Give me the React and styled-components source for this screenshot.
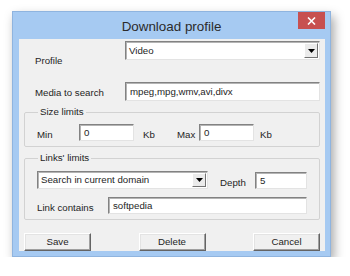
import styled, { createGlobalStyle } from "styled-components";

const GlobalStyle = createGlobalStyle`
  body {
    margin: 0;
    background: #ffffff;
    font-family: "Liberation Sans", Arial, sans-serif;
  }
`;

const Window = styled.div`
  box-sizing: border-box;
  width: 319px;
  margin: 11px 0 0 12px;
  background: #a6caf2;
  border: 1px solid #8fb4df;
  box-shadow: 3px 5px 10px rgba(0, 0, 0, 0.35);
`;

const TitleBar = styled.div`
  height: 27px;
  display: grid;
  grid-template-columns: 1fr auto 1fr;
`;

const Title = styled.div`
  grid-column: 2;
  align-self: center;
  font-size: 13.4px;
  color: #2b2b2b;
  padding-top: 1px;
`;

const CloseButton = styled.div`
  grid-column: 3;
  justify-self: end;
  width: 27px;
  height: 17px;
  margin-right: 5px;
  background: #c75050;
  display: flex;
  align-items: center;
  justify-content: center;
`;

const Client = styled.div`
  box-sizing: border-box;
  margin: 0 5px 5px 6px;
  height: 212px;
  background: #f0f0f0;
  padding: 2px 5px 0 5px;
  display: flex;
  flex-direction: column;
  font-size: 9.7px;
  color: #1e1e1e;
`;

const FormRow = styled.div`
  display: grid;
  grid-template-columns: 101px 195px;
  margin-top: ${(p) => p.$top || 0}px;
`;

const Label = styled.div`
  line-height: 12px;
  padding-left: ${(p) => p.$indent || 0}px;
  padding-top: ${(p) => p.$drop || 0}px;
  white-space: nowrap;
`;

const Sunken = styled.div`
  box-sizing: border-box;
  height: ${(p) => p.$h}px;
  width: ${(p) => (p.$w ? `${p.$w}px` : "auto")};
  background: #ffffff;
  border: 1px solid;
  border-color: #828282 #e3e3e3 #e3e3e3 #828282;
  box-shadow: inset 1px 1px #b4b4b4;
  display: flex;
  align-items: center;
  padding-left: 4px;
  line-height: 12px;
  white-space: nowrap;
`;

const SelectBox = styled(Sunken)`
  padding: 1px 1px 1px 3px;
  justify-content: space-between;
`;

const DropButton = styled.div`
  box-sizing: border-box;
  width: 14px;
  height: 100%;
  background: #ebebeb;
  border: 1px solid;
  border-color: #ffffff #737373 #737373 #ffffff;
  display: flex;
  align-items: center;
  justify-content: center;
`;

const Group = styled.fieldset`
  margin: ${(p) => p.$top}px 0 0 0;
  padding: ${(p) => p.$pt}px 0 5px 12px;
  border: 1px solid #d2d2d2;
  border-radius: 2px;
  min-width: 0;
`;

const Legend = styled.legend`
  margin-left: 1px;
  padding: 0 2px;
  line-height: 12px;
`;

const LineRow = styled.div`
  display: grid;
  grid-template-columns: ${(p) => p.$cols};
  align-items: end;
  margin-top: ${(p) => p.$top || 0}px;
`;

const ButtonRow = styled.div`
  display: flex;
  justify-content: space-between;
  margin-top: 13px;
`;

const Button = styled.div`
  box-sizing: border-box;
  width: 67px;
  height: 18px;
  background: #f0f0f0;
  border: 1px solid;
  border-color: #ffffff #646464 #646464 #ffffff;
  box-shadow: inset -1px -1px #a0a0a0, inset 1px 1px #e3e3e3;
  display: flex;
  align-items: center;
  justify-content: center;
  line-height: 12px;
`;

function Arrow() {
  return (
    <svg width="7" height="4" viewBox="0 0 7 4">
      <path d="M0 0 H7 L3.5 4 Z" fill="#000" />
    </svg>
  );
}

function Select({ value, h, w }) {
  return (
    <SelectBox $h={h} $w={w}>
      <span>{value}</span>
      <DropButton>
        <Arrow />
      </DropButton>
    </SelectBox>
  );
}

export default function App() {
  return (
    <>
      <GlobalStyle />
      <Window>
        <TitleBar>
          <Title>Download profile</Title>
          <CloseButton>
            <svg width="9" height="8" viewBox="0 0 9 8">
              <path d="M1 0.5 L8 7.5 M8 0.5 L1 7.5" stroke="#fff" strokeWidth="1.6" />
            </svg>
          </CloseButton>
        </TitleBar>
        <Client>
          <FormRow>
            <Label $indent={11} $drop={14}>Profile</Label>
            <Select value="Video" h={19} />
          </FormRow>
          <FormRow $top={15}>
            <Label $indent={11} $drop={5}>Media to search</Label>
            <Sunken $h={19}>mpeg,mpg,wmv,avi,divx</Sunken>
          </FormRow>

          <Group $top={5} $pt={6}>
            <Legend>Size limits</Legend>
            <LineRow $cols="42px 55px 43px 22px 55px auto">
              <Label>Min</Label>
              <Sunken $h={17}>0</Sunken>
              <Label $indent={9}>Kb</Label>
              <Label>Max</Label>
              <Sunken $h={17}>0</Sunken>
              <Label $indent={6}>Kb</Label>
            </LineRow>
          </Group>

          <Group $top={5} $pt={7}>
            <Legend>Links' limits</Legend>
            <LineRow $cols="171px 47px 52px">
              <Select value="Search in current domain" h={18} />
              <Label $indent={12}>Depth</Label>
              <Sunken $h={17}>5</Sunken>
            </LineRow>
            <LineRow $cols="71px 199px" $top={8}>
              <Label>Link contains</Label>
              <Sunken $h={17}>softpedia</Sunken>
            </LineRow>
          </Group>

          <ButtonRow>
            <Button>Save</Button>
            <Button>Delete</Button>
            <Button>Cancel</Button>
          </ButtonRow>
        </Client>
      </Window>
    </>
  );
}
